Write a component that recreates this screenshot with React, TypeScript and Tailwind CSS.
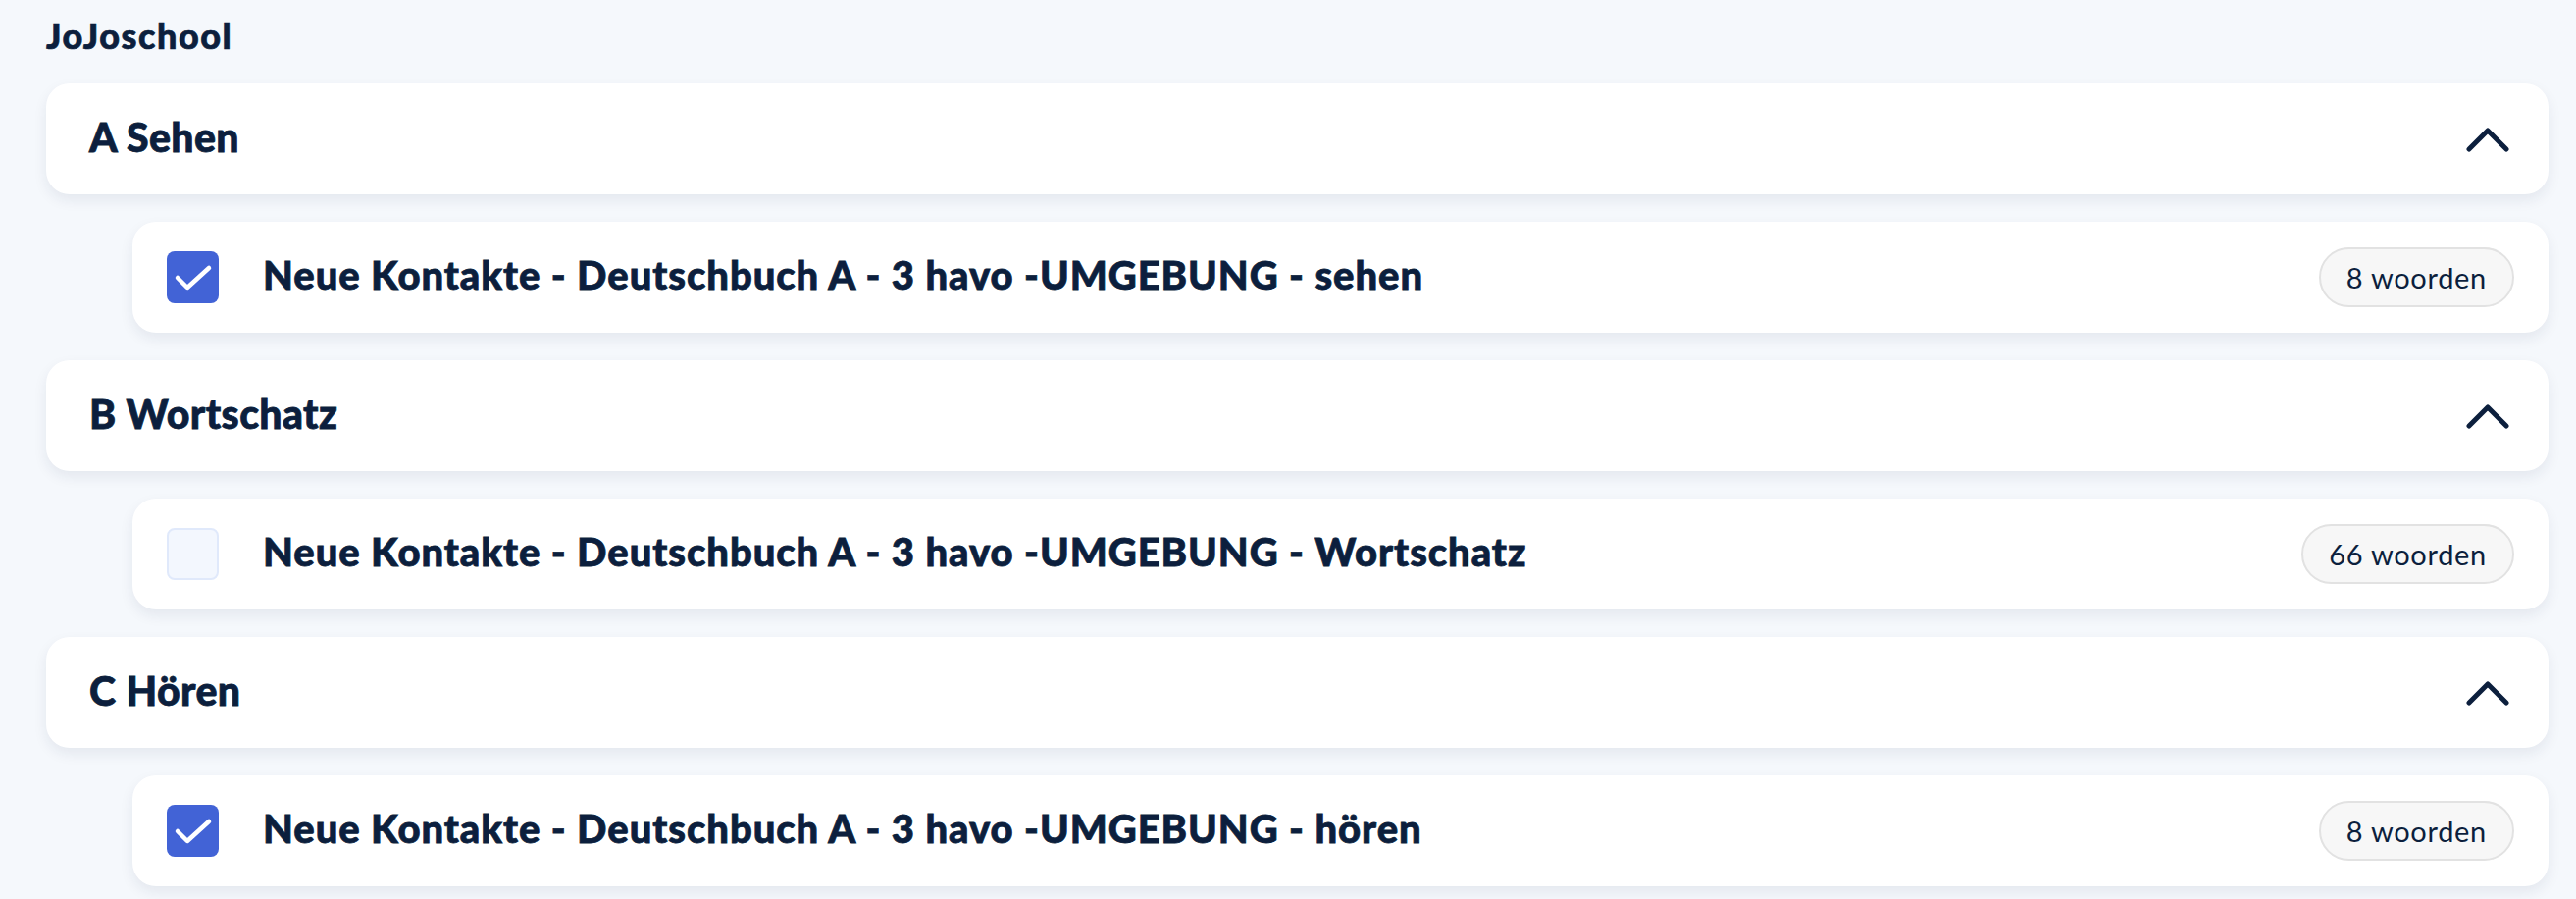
import React from "react";

type Item = { section: string; title: string; words: number; checked: boolean };

const items: Item[] = [
  { section: "A Sehen", title: "Neue Kontakte - Deutschbuch A - 3 havo -UMGEBUNG - sehen", words: 8, checked: true },
  { section: "B Wortschatz", title: "Neue Kontakte - Deutschbuch A - 3 havo -UMGEBUNG - Wortschatz", words: 66, checked: false },
  { section: "C Hören", title: "Neue Kontakte - Deutschbuch A - 3 havo -UMGEBUNG - hören", words: 8, checked: true },
];

function Chevron() {
  return (
    <svg width="44" height="28" viewBox="0 0 44 28" fill="none">
      <polyline points="3,24 22,5 41,24" stroke="#0c1f3d" strokeWidth="5" strokeLinecap="round" strokeLinejoin="round" />
    </svg>
  );
}

function Checkbox({ checked }: { checked: boolean }) {
  if (checked) {
    return (
      <div className="w-[53px] h-[53px] rounded-[8px] bg-[#4263d6] flex items-center justify-center shrink-0">
        <svg width="53" height="53" viewBox="0 0 53 53" fill="none">
          <polyline points="11,27 21,37 43,17" stroke="#ffffff" strokeWidth="4.5" strokeLinecap="round" strokeLinejoin="round" />
        </svg>
      </div>
    );
  }
  return <div className="w-[53px] h-[53px] rounded-[8px] bg-[#f3f7fe] border-2 border-[#e0e9fb] shrink-0" />;
}

export default function App() {
  return (
    <div className="min-h-[916px] w-full bg-[#f5f8fc] pl-[47px] pr-[28px] pt-[14px] pb-[20px]" style={{ fontFamily: "Lato, 'Noto Sans', sans-serif" }}>
      <div className="text-[36px] leading-[44px] font-black text-[#0c1f3d] tracking-[1.5px] [-webkit-text-stroke:0.7px_#0c1f3d]">JoJoschool</div>
      <div className="mt-[27px] flex flex-col gap-[28px]">
        {items.map((it) => (
          <React.Fragment key={it.section}>
            <div className="h-[113px] rounded-[24px] bg-white shadow-[0_6px_14px_rgba(20,40,80,0.08)] flex items-center justify-between pl-[44px] pr-[40px]">
              <div className="pb-[4px] text-[41px] font-black text-[#0c1f3d] tracking-[0.4px] [-webkit-text-stroke:0.8px_#0c1f3d]">{it.section}</div>
              <Chevron />
            </div>
            <div className="ml-[88px] h-[113px] rounded-[24px] bg-white shadow-[0_6px_14px_rgba(20,40,80,0.08)] flex items-center pl-[35px] pr-[35px]">
              <Checkbox checked={it.checked} />
              <div className="pb-[5px] ml-[45px] text-[40px] font-black text-[#0c1f3d] flex-1 whitespace-nowrap tracking-[0.95px] [-webkit-text-stroke:0.8px_#0c1f3d]">{it.title}</div>
              <div className="h-[61px] rounded-full border-2 border-[#e2e2e2] bg-[#f7f7f7] px-[26px] flex items-center text-[29px] text-[#0c1f3d] tracking-[0.7px]">
                {it.words} woorden
              </div>
            </div>
          </React.Fragment>
        ))}
      </div>
    </div>
  );
}
